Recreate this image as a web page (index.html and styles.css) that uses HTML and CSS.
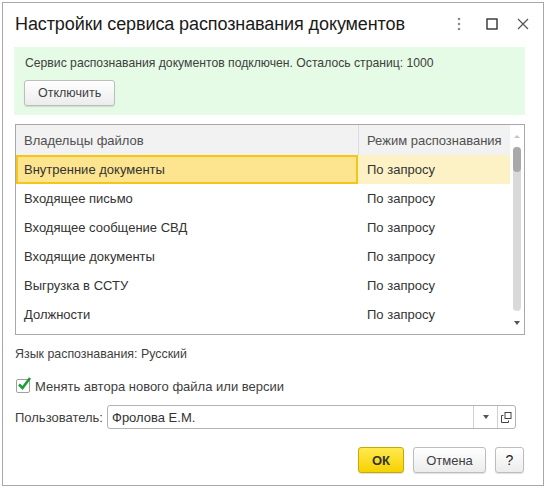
FILE: index.html
```html
<!DOCTYPE html>
<html lang="ru">
<head>
  <meta charset="UTF-8">
  <title>Настройки сервиса распознавания документов</title>
  <link rel="stylesheet" href="styles.css">
</head>
<body>
  <div class="window">
    <div class="titlebar">
      <h1>Настройки сервиса распознавания документов</h1>
      <div class="win-controls">
        <svg width="6" height="14" viewBox="0 0 6 14"><circle cx="3" cy="2" r="1.3" fill="#8c8c8c"/><circle cx="3" cy="7" r="1.3" fill="#8c8c8c"/><circle cx="3" cy="12" r="1.3" fill="#8c8c8c"/></svg>
        <svg width="12" height="12" viewBox="0 0 12 12"><rect x="1" y="1" width="10" height="10" fill="none" stroke="#333" stroke-width="1.4"/></svg>
        <svg width="12" height="12" viewBox="0 0 12 12"><path d="M1 1 L11 11 M11 1 L1 11" stroke="#555" stroke-width="1.2"/></svg>
      </div>
    </div>

    <div class="content">
      <!-- Service status -->
      <div class="notice">
        <p>Сервис распознавания документов подключен. Осталось страниц: 1000</p>
        <button class="btn">Отключить</button>
      </div>

      <!-- File owners -->
      <div class="table">
        <div class="grid">
          <div class="th">Владельцы файлов</div>
          <div class="th th-sep">Режим распознавания</div>

          <div class="td sel-main">Внутренние документы</div>
          <div class="td sel">По запросу</div>
          <div class="td">Входящее письмо</div>
          <div class="td">По запросу</div>
          <div class="td">Входящее сообщение СВД</div>
          <div class="td">По запросу</div>
          <div class="td">Входящие документы</div>
          <div class="td">По запросу</div>
          <div class="td">Выгрузка в ССТУ</div>
          <div class="td">По запросу</div>
          <div class="td">Должности</div>
          <div class="td">По запросу</div>
        </div>
        <div class="scrollbar">
          <span class="arrow-up"></span>
          <div class="track"><div class="thumb"></div></div>
          <span class="arrow-down"></span>
        </div>
      </div>

      <p class="lang">Язык распознавания: Русский</p>

      <label class="check">
        <span class="box">
          <svg width="16" height="16" viewBox="0 0 16 16"><path d="M3 8.5 L6.5 12 L14 2" fill="none" stroke="#1a9e3a" stroke-width="2.6"/></svg>
        </span>
        Менять автора нового файла или версии
      </label>

      <div class="field">
        <span class="field-label">Пользователь:</span>
        <div class="input">
          <span class="value">Фролова Е.М.</span>
          <span class="ibtn"><svg width="6" height="4" viewBox="0 0 6 4"><path d="M0 0 H6 L3 4 Z" fill="#555"/></svg></span>
          <span class="ibtn ibtn-open">
            <svg width="11" height="11" viewBox="0 0 11 11"><rect x="4" y="0.5" width="6" height="6" fill="none" stroke="#444"/><path d="M2.5 3.5 H0.5 V10.5 H7.5 V8.5" fill="none" stroke="#444"/></svg>
          </span>
        </div>
      </div>

      <div class="footer">
        <button class="btn btn-ok">ОК</button>
        <button class="btn btn-cancel">Отмена</button>
        <button class="btn btn-help">?</button>
      </div>
    </div>
  </div>
</body>
</html>
```

FILE: styles.css
```css
body {
  margin: 0;
  background: #ffffff;
  font-family: "Liberation Sans", Arial, sans-serif;
  font-size: 13px;
  color: #404040;
}

.window {
  margin: 2px;
  width: 542px;
  height: 484px;
  box-sizing: border-box;
  border: 1px solid #a8a8a8;
  background: #ffffff;
}

.titlebar {
  display: flex;
  justify-content: space-between;
  height: 44px;
  padding: 9px 0 0 12px;
  box-sizing: border-box;
}

.titlebar h1 {
  margin: 0;
  font-size: 18px;
  font-weight: normal;
  letter-spacing: -0.1px;
  line-height: 24px;
  color: #1a1a1a;
}

.win-controls {
  display: flex;
  align-items: center;
  gap: 19px;
  height: 24px;
  padding-right: 14px;
}

.win-controls svg:first-child {
  margin-right: 5px;
}

.content {
  padding: 0 18px 0 12px;
}

.notice {
  margin-left: -1px;
  padding: 8px 10px 9px;
  background: #e5fbe5;
}

.notice p {
  margin: 0 0 9px 1px;
  font-size: 12.2px;
  line-height: 16px;
  color: #404040;
}

.btn {
  height: 26px;
  padding: 0 13px;
  border: 1px solid #bdbdbd;
  border-radius: 3px;
  background: linear-gradient(#ffffff, #ececec);
  box-shadow: 0 1px 1px rgba(0, 0, 0, 0.12);
  font-family: inherit;
  font-size: 12.5px;
  color: #404040;
  cursor: pointer;
}

.table {
  display: flex;
  margin-top: 9px;
  height: 211px;
  box-sizing: border-box;
  border: 1px solid #a8a8a8;
}

.grid {
  flex: 1;
  display: grid;
  grid-template-columns: 342px 1fr;
  grid-auto-rows: 29px;
  grid-template-rows: 30px;
  align-content: start;
}

.th {
  display: flex;
  align-items: center;
  padding-left: 8px;
  background: #f2f2f2;
  color: #505050;
}

.th-sep {
  border-left: 1px solid #dcdcdc;
}

.td {
  display: flex;
  align-items: center;
  padding-left: 8px;
  color: #333333;
}

.td:nth-child(even) {
  padding-left: 9px;
}

.sel-main {
  background: #fde58f;
  box-shadow: inset 0 0 0 2px #f5c518;
}

.sel {
  background: #fdf2c6;
}

.scrollbar {
  width: 14px;
  display: flex;
  flex-direction: column;
  align-items: center;
  padding: 10px 0 8px;
  box-sizing: border-box;
}

.arrow-up {
  width: 0;
  height: 0;
  border-left: 3px solid transparent;
  border-right: 3px solid transparent;
  border-bottom: 3px solid #c4c4c4;
}

.track {
  margin-top: 9px;
  width: 8px;
  height: 164px;
  border-radius: 4px;
  background: #d9d9d9;
}

.thumb {
  height: 25px;
  border-radius: 4px;
  background: #a9a9a9;
}

.arrow-down {
  margin-top: 10px;
  width: 0;
  height: 0;
  border-left: 3px solid transparent;
  border-right: 3px solid transparent;
  border-top: 4px solid #555555;
}

.lang {
  margin: 11px 0 0;
  font-size: 12.4px;
  line-height: 16px;
}

.check {
  display: flex;
  align-items: center;
  gap: 5px;
  margin-top: 14px;
  height: 20px;
  padding-left: 1px;
}

.box {
  position: relative;
  width: 12px;
  height: 12px;
  border: 1px solid #a0a0a0;
  border-radius: 2px;
  background: #ffffff;
}

.box svg {
  position: absolute;
  left: -1px;
  top: -4px;
}

.field {
  display: flex;
  align-items: center;
  margin-top: 9px;
}

.field-label {
  width: 92px;
}

.input {
  display: flex;
  width: 409px;
  height: 24px;
  box-sizing: border-box;
  border: 1px solid #b3b3b3;
  border-radius: 3px;
  background: #ffffff;
}

.value {
  flex: 1;
  display: flex;
  align-items: center;
  padding-left: 4px;
  color: #333333;
}

.ibtn {
  width: 23px;
  display: flex;
  align-items: center;
  justify-content: center;
  border-left: 1px solid #d0d0d0;
}

.ibtn-open {
  width: 17px;
}

.footer {
  display: flex;
  justify-content: flex-end;
  gap: 9px;
  margin-top: 18px;
  margin-right: 1px;
}

.btn-ok {
  width: 46px;
  padding: 0;
  border-color: #c9a800;
  background: linear-gradient(#ffe94f, #f5d200);
  color: #333333;
  font-size: 13px;
  font-weight: bold;
}

.btn-cancel {
  width: 73px;
  padding: 0;
  font-size: 13px;
}

.btn-help {
  width: 29px;
  padding: 0;
  font-size: 14px;
  color: #222222;
}
```
